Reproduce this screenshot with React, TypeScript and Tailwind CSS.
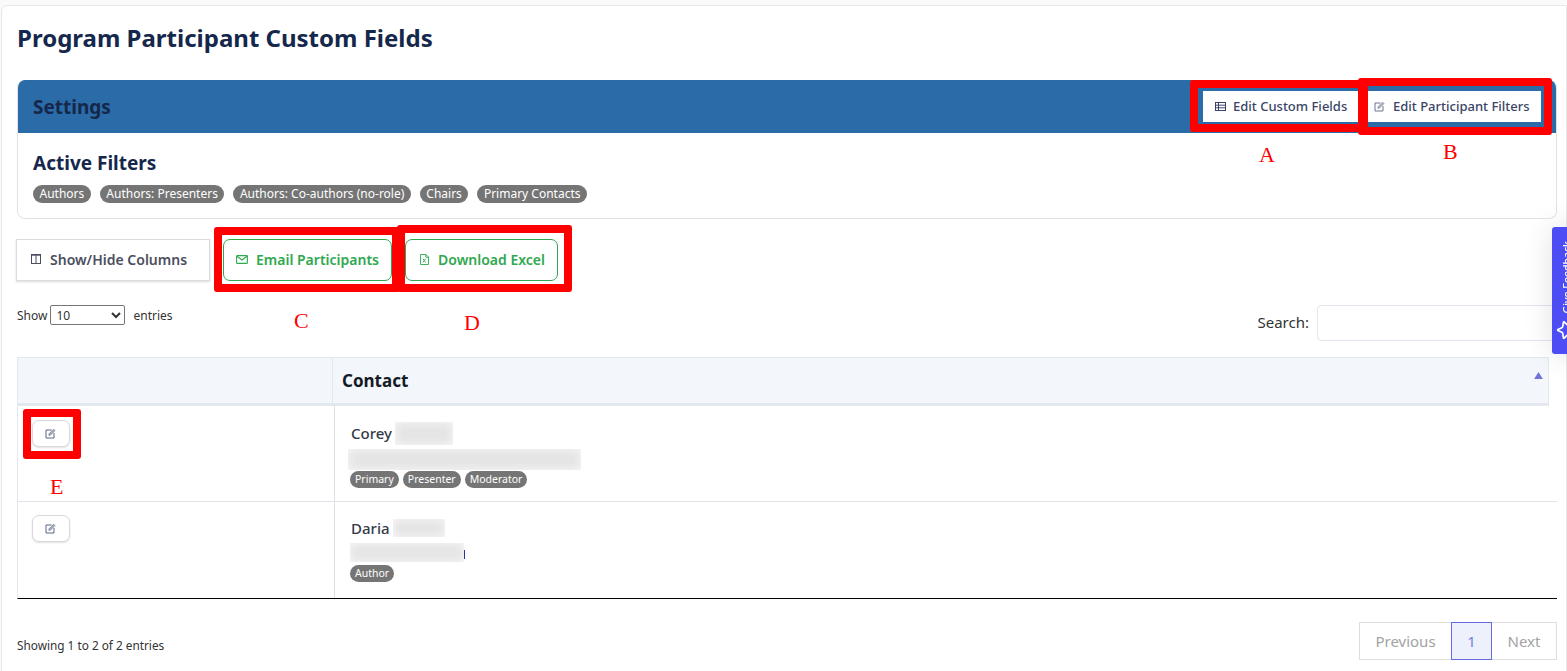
import React from "react";
import { LuStar } from "react-icons/lu";

const filters = ["Authors", "Authors: Presenters", "Authors: Co-authors (no-role)", "Chairs", "Primary Contacts"];

function Badge({ label, small }: { label: string; small?: boolean }) {
  return (
    <span className={`inline-flex items-center rounded-full bg-[#757575] text-white ${small ? "h-[17px] px-[5px] text-[10.5px]" : "h-[18px] px-[6.5px] text-[12px]"}`}>
      {label}
    </span>
  );
}

function Blur({ className }: { className: string }) {
  return (
    <div className={`bg-[#faf9f9] overflow-hidden ${className}`}>
      <div className="w-full h-full bg-[#e6e5e5] blur-[4px]" />
    </div>
  );
}

function TableIcon() {
  return (
    <svg viewBox="0 0 11 9" className="w-[11px] h-[9px]" fill="none" stroke="currentColor" strokeWidth="1">
      <rect x="0.5" y="0.5" width="10" height="8" />
      <path d="M0.5 3.2H10.5M0.5 5.8H10.5M3.5 0.5V8.5" />
    </svg>
  );
}

function ColumnsIcon() {
  return (
    <svg viewBox="0 0 10 10" className="w-[10px] h-[10px]" fill="none" stroke="currentColor" strokeWidth="1">
      <rect x="0.5" y="0.5" width="9" height="9" />
      <path d="M5 0.5V9.5" />
      <path d="M0.5 1.2H9.5" />
    </svg>
  );
}

function MailIcon() {
  return (
    <svg viewBox="0 0 12 9" className="w-[12px] h-[9px]" fill="none" stroke="currentColor" strokeWidth="1.1">
      <rect x="0.6" y="0.6" width="10.8" height="7.8" rx="0.6" />
      <path d="M1 1.2L6 5L11 1.2" />
    </svg>
  );
}

function ExcelIcon() {
  return (
    <svg viewBox="0 0 9 11" className="w-[9px] h-[11px]" fill="none" stroke="currentColor" strokeWidth="0.9">
      <path d="M0.5 0.5H6L8.5 3V10.5H0.5Z" />
      <path d="M5.8 0.5V3.2H8.5" />
      <path d="M2.9 4.6L5.6 8.4M5.6 4.6L2.9 8.4" />
    </svg>
  );
}

function EditIcon() {
  return (
    <svg viewBox="0 0 11 11" className="w-[11px] h-[11px]" fill="none" stroke="currentColor" strokeWidth="1">
      <path d="M6.5 2H1V10H9V5" />
      <path d="M3.8 7.4L4.2 5.6L8.6 1.2L10 2.6L5.6 7Z" fill="currentColor" fillOpacity="0.5" strokeWidth="0.6" />
    </svg>
  );
}

function EditButton() {
  return (
    <button className="w-[38px] h-[27px] rounded-[7px] border border-[#d9d9de] bg-white shadow-[0_1px_2px_rgba(0,0,0,0.12)] flex items-center justify-center pr-[2px] text-[#5a6485]">
      <EditIcon />
    </button>
  );
}

// red marks drawn over the screenshot
function Mark({ className }: { className: string }) {
  return <div className={`absolute border-[8px] border-[#ff0000] rounded-[3px] pointer-events-none ${className}`} />;
}

function Letter({ className, children }: { className: string; children: React.ReactNode }) {
  return <div className={`absolute text-[#f00] text-[22px] leading-none font-['Liberation_Serif',serif] ${className}`}>{children}</div>;
}

export default function App() {
  return (
    <div className="relative h-[671px] w-full overflow-hidden bg-[#fafafa] pt-[5px] pl-[1px] font-['Noto_Sans','Open_Sans',sans-serif] text-[#2a2f3a]">
      <div className="h-[680px] bg-white border border-[#e8e8e8] rounded-tl-[6px] pl-[15px] pr-[9px]">
        <h1 className="h-[74px] pt-[14px] text-[24px] leading-[36px] font-bold text-[#15274b]">Program Participant Custom Fields</h1>

        <div className="border border-[#e2e2e2] border-t-0 rounded-[8px] overflow-hidden h-[139px]">
          <div className="h-[53px] bg-[#2b6ca8] flex items-center justify-between pl-[15px] pr-[15px]">
            <div className="text-[19px] font-bold text-[#15274b] pt-[1px]">Settings</div>
            <div className="flex">
              <button className="w-[165px] h-[31px] bg-white text-[#3a4466] text-[13px] font-medium flex items-center gap-[7px] pl-[12px]">
                <TableIcon />
                Edit Custom Fields
              </button>
              <button className="w-[173px] h-[31px] bg-white text-[#3a4466] text-[13px] font-medium flex items-center gap-[8px] pl-[6px]">
                <span className="text-[#6b7390]"><EditIcon /></span>
                Edit Participant Filters
              </button>
            </div>
          </div>
          <div className="pl-[15px] pt-[15px]">
            <div className="text-[19px] leading-[30px] font-bold text-[#15274b]">Active Filters</div>
            <div className="flex gap-[9px] mt-[7px]">
              {filters.map((f) => (
                <Badge key={f} label={f} />
              ))}
            </div>
          </div>
        </div>

        <div className="flex mt-[20px] h-[42px]">
          <button className="w-[194px] h-[42px] border border-[#dcdce0] bg-white shadow-[0_1px_2px_rgba(0,0,0,0.15)] text-[14px] font-semibold text-[#4b4f60] flex items-center gap-[9px] -ml-[1px] pl-[14px] pb-[2px]">
            <ColumnsIcon />
            Show/Hide Columns
          </button>
          <button className="ml-[13px] w-[169px] h-[42px] border border-[#2fa84f] rounded-[7px] bg-white text-[14px] font-semibold text-[#2fa84f] flex items-center justify-center gap-[8px] pb-[2px]">
            <MailIcon />
            Email Participants
          </button>
          <button className="ml-[13px] w-[153px] h-[42px] border border-[#2fa84f] rounded-[7px] bg-white text-[14px] font-semibold text-[#2fa84f] flex items-center justify-center gap-[9px] pl-[2px] pb-[2px]">
            <ExcelIcon />
            Download Excel
          </button>
        </div>

        <div className="flex justify-between mt-[24px] h-[52px]">
          <div className="flex items-start text-[12px] text-[#333]">
            <span className="leading-[21px]">Show</span>
            <select className="ml-[3px] w-[75px] h-[20px] border border-[#767676] rounded-[2px] bg-white text-[12px] px-[1px]">
              <option>10</option>
            </select>
            <span className="ml-[8px] leading-[21px]">entries</span>
          </div>
          <div className="flex items-start -mr-[10px]">
            <span className="text-[15px] leading-[34px] mr-[8px] text-[#333]">Search:</span>
            <div className="w-[250px] h-[36px] border border-[#e3e6ee] rounded-[4px] bg-white" />
          </div>
        </div>

        <div className="mr-[8px] h-[49px] bg-[#f3f6fa] border border-[#e3e7ee] border-b-[3px] grid grid-cols-[314px_1fr]">
          <div />
          <div className="relative border-l border-[#e3e7ee] pl-[9px] text-[17px] leading-[45px] font-bold text-[#141a26]">
            Contact
            <svg viewBox="0 0 10 8" className="absolute right-[5px] top-[14px] w-[9px] h-[7px]">
              <path d="M5 0 L10 8 L0 8 Z" fill="#7272d8" />
            </svg>
          </div>
        </div>

        <div className="border-l border-b border-[#e3e7ee] border-b-black">
          <div className="grid grid-cols-[316px_1fr] h-[96px] border-b border-[#e0e3e8]">
            <div className="pl-[14px] pt-[14px]">
              <EditButton />
            </div>
            <div className="border-l border-[#dde1e7] pl-[16px] pt-[15px]">
              <div className="flex items-center h-[24px] text-[15px] font-medium text-[#333a48]">
                Corey
                <Blur className="ml-[3px] w-[58px] h-[23px]" />
              </div>
              <Blur className="mt-[4px] -ml-[3px] w-[233px] h-[21px]" />
              <div className="flex gap-[4px] mt-[1px] -ml-[1px]">
                <Badge small label="Primary" />
                <Badge small label="Presenter" />
                <Badge small label="Moderator" />
              </div>
            </div>
          </div>
          <div className="grid grid-cols-[316px_1fr] h-[96px]">
            <div className="pl-[14px] pt-[13px]">
              <EditButton />
            </div>
            <div className="border-l border-[#dde1e7] pl-[16px] pt-[14px]">
              <div className="flex items-center h-[24px] text-[15px] font-medium text-[#333a48]">
                Daria
                <Blur className="ml-[3px] w-[52px] h-[18px]" />
              </div>
              <div className="flex items-end mt-[3px] -ml-[1px] h-[19px]">
                <Blur className="w-[114px] h-[19px]" />
                <div className="w-[1px] h-[9px] mb-[3px] bg-[#1e3a9e]" />
              </div>
              <div className="flex mt-[3px] -ml-[1px]">
                <Badge small label="Author" />
              </div>
            </div>
          </div>
        </div>

        <div className="flex justify-between mt-[23px]">
          <div className="text-[11.8px] mt-[15px] text-[#333]">
            Showing 1 to 2 of 2 entries
          </div>
          <div className="flex h-[38px] text-[15px] text-[#a3a3a3] border border-[#dedede]">
            <div className="w-[91px] flex items-center justify-center">Previous</div>
            <div className="w-[41px] flex items-center justify-center bg-[#edf1fc] border border-[#6a6ae0] text-[#7a7ae0] -my-[1px]">1</div>
            <div className="w-[64px] flex items-center justify-center">Next</div>
          </div>
        </div>
      </div>

      {/* feedback tab */}
      <div className="absolute left-[1552px] top-[227px] w-[40px] h-[127px] bg-[#4d4df5] rounded-l-[3px] shadow-[0_0_30px_rgba(0,0,0,0.12)] overflow-hidden text-white">
        <div className="absolute left-[7px] bottom-[41px] [writing-mode:vertical-rl] rotate-180 text-[10.5px] font-medium leading-[16px] whitespace-nowrap">Give Feedback</div>
        <LuStar className="absolute left-[4px] top-[93px] w-[20px] h-[20px] rotate-[-90deg]" />
      </div>

      {/* annotations */}
      <Mark className="left-[1190px] top-[80px] w-[178px] h-[52px]" />
      <Mark className="left-[1358px] top-[78px] w-[194px] h-[57px]" />
      <Mark className="left-[214px] top-[227px] w-[186px] h-[65px]" />
      <Mark className="left-[397px] top-[225px] w-[175px] h-[67px]" />
      <Mark className="left-[23px] top-[409px] w-[58px] h-[50px]" />
      <Letter className="left-[1259px] top-[144px]">A</Letter>
      <Letter className="left-[1443px] top-[141px]">B</Letter>
      <Letter className="left-[294px] top-[310px]">C</Letter>
      <Letter className="left-[464px] top-[312px]">D</Letter>
      <Letter className="left-[50px] top-[476px]">E</Letter>
    </div>
  );
}
